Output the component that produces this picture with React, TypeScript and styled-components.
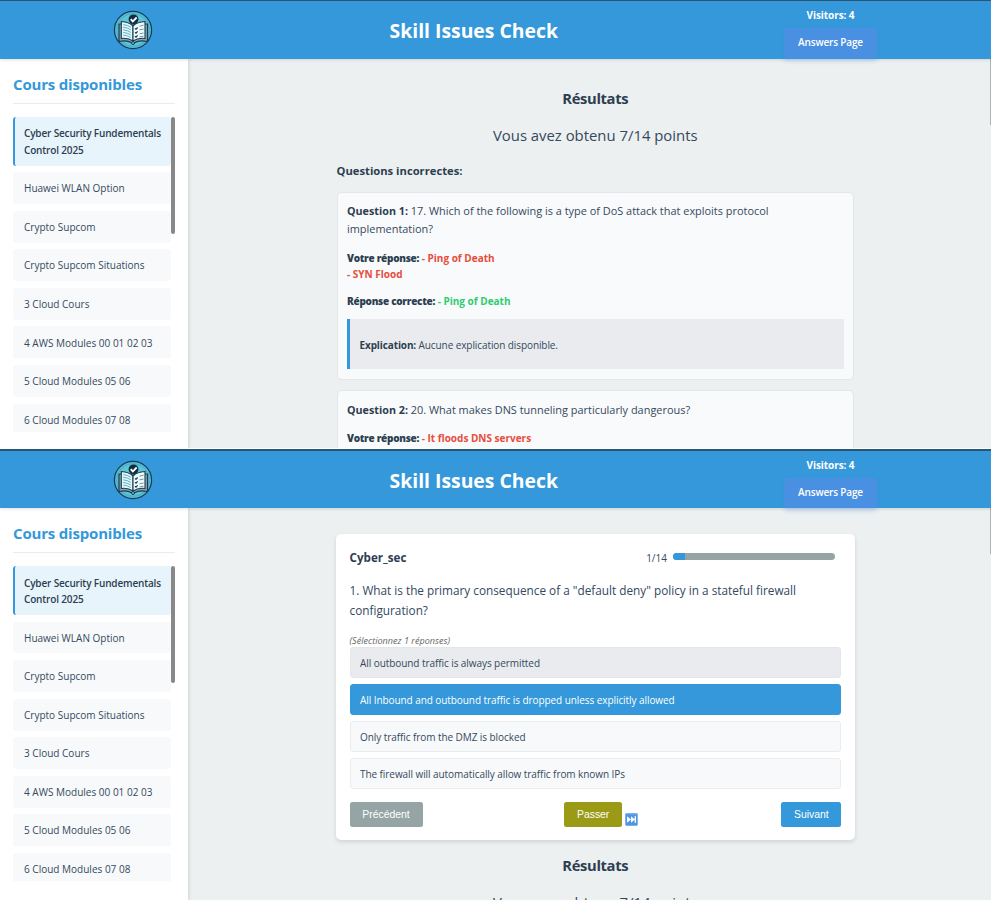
import React from 'react';
import styled, { createGlobalStyle, css } from 'styled-components';

const GlobalStyle = createGlobalStyle`
  * { box-sizing: border-box; }
  body {
    margin: 0;
    background: #ecf0f1;
    color: #34495e;
    font-family: "Open Sans", "Noto Sans", sans-serif;
  }
  h1, h2, h3, h4, p, ul { margin: 0; padding: 0; }
  ul { list-style: none; }
`;

const Page = styled.div`
  width: 991px;
  height: 900px;
  overflow: hidden;
`;

const Screen = styled.section<{ $last?: boolean }>`
  display: flex;
  flex-direction: column;
  height: ${(p) => (p.$last ? '451px' : '449px')};
  overflow: hidden;
  border-bottom: ${(p) => (p.$last ? 'none' : '1px solid #fbfcfc')};
`;

const TopBar = styled.header<{ $last?: boolean }>`
  position: relative;
  z-index: 2;
  flex: none;
  display: grid;
  grid-template-columns: 267px 413.5px 300px;
  height: ${(p) => (p.$last ? '59.4px' : '59px')};
  background: #3498db;
  border-top: ${(p) => (p.$last ? '2px' : '1px')} solid #2a5673;
  box-shadow: 0 1px 3px rgba(0, 0, 0, 0.13);
`;

const LogoCell = styled.div`
  display: flex;
  justify-content: center;
  padding: 9px 1px 0 0;
`;

const SiteTitle = styled.h1`
  color: #fff;
  font-size: 19.38px;
  font-weight: 700;
  line-height: 30px;
  padding-top: 15px;
  text-align: center;
`;

const Aside = styled.div`
  display: flex;
  flex-direction: column;
  align-items: center;
`;

const Visitors = styled.span`
  padding-top: 6px;
  color: #fff;
  font-size: 10px;
  font-weight: 700;
  line-height: 17px;
  letter-spacing: -0.07px;
`;

const AnswersLink = styled.a`
  margin-top: 4px;
  width: 93px;
  height: 30px;
  border-radius: 3px;
  background: #4a90e2;
  box-shadow: 0 3px 4px rgba(74, 144, 226, 0.28);
  color: #fff;
  font-size: 10px;
  font-weight: 600;
  line-height: 29px;
  letter-spacing: -0.15px;
  text-align: center;
`;

const Body = styled.div`
  flex: 1;
  min-height: 0;
  display: flex;
`;

const Sidebar = styled.nav`
  flex: none;
  width: 188px;
  padding: 13px;
  background: #fff;
  box-shadow: 1px 0 3px rgba(0, 0, 0, 0.12);
`;

const SidebarTitle = styled.h2`
  height: 32px;
  margin-bottom: 13px;
  border-bottom: 1px solid #e9ecee;
  color: #3498db;
  font-size: 15px;
  font-weight: 700;
  line-height: 25.6px;
  letter-spacing: -0.18px;
`;

const CourseScroller = styled.div`
  display: flex;
  justify-content: space-between;
  height: 315px;
  overflow: hidden;
`;

const CourseList = styled.ul`
  width: 158px;
`;

const Course = styled.li<{ $active?: boolean }>`
  height: 31.8px;
  margin-bottom: 6.75px;
  padding: 8.1px 11px;
  border-radius: 3px;
  background: #f8f9fa;
  font-size: 10.03px;
  line-height: 17px;
  white-space: nowrap;
  ${(p) =>
    p.$active &&
    css`
      height: 48.5px;
      padding: 8.3px 0 0 9px;
      border-left: 2px solid #3498db;
      background: #e8f4fc;
      color: #2c3e50;
      font-size: 10px;
      font-weight: 600;
      line-height: 16.6px;
      letter-spacing: -0.16px;
    `}
`;

const ScrollThumb = styled.div`
  width: 4px;
  height: 117px;
  border-radius: 2px;
  background: #888;
`;

const Main = styled.main`
  flex: 1;
  min-width: 0;
  display: flex;
  justify-content: space-between;
`;

const Column = styled.div`
  width: 517.5px;
  margin-left: 148.5px;
`;

const PageThumb = styled.div<{ $h: number }>`
  width: 1px;
  height: ${(p) => p.$h}px;
  background: #aeb2b3;
`;

const ResultTitle = styled.h2<{ $top: number }>`
  padding-top: ${(p) => p.$top}px;
  color: #2c3e50;
  font-size: 14.75px;
  font-weight: 700;
  line-height: 24px;
  letter-spacing: -0.33px;
  text-align: center;
`;

const Score = styled.p`
  margin-top: 13px;
  font-size: 14.86px;
  line-height: 25px;
  text-align: center;
`;

const SectionTitle = styled.h3`
  margin-top: 12.5px;
  color: #2c3e50;
  font-size: 11.22px;
  font-weight: 700;
  line-height: 20px;
`;

const ReviewCard = styled.article`
  margin: 11.3px 0 10px;
  height: 188.5px;
  padding: 9.5px 9px 0 9.5px;
  border: 1px solid #e3e7e9;
  border-radius: 5px;
  background: #f9fafb;
  & + & { margin-top: 0; }
`;

const Prompt = styled.p`
  font-size: 10.93px;
  line-height: 18px;
  b { color: #2c3e50; font-size: 10.75px; }
`;

const Answer = styled.p<{ $tone: string; $gap: number }>`
  margin-top: ${(p) => p.$gap}px;
  color: ${(p) => p.$tone};
  font-size: 10px;
  font-weight: 700;
  line-height: 16.6px;
  b { color: #2c3e50; letter-spacing: -0.28px; }
`;

const Explanation = styled.div`
  margin-top: 9.2px;
  height: 50px;
  border-left: 3px solid #3498db;
  background: #e9ebee;
  padding-left: 9.5px;
  font-size: 10px;
  line-height: 52px;
  letter-spacing: -0.09px;
  b { color: #2c3e50; letter-spacing: -0.12px; }
`;

const QuizCard = styled.article`
  margin: 26px 0 0 -0.5px;
  width: 518.5px;
  height: 305.5px;
  padding: 13px 13.2px 0 13.5px;
  border-radius: 5px;
  background: #fff;
  box-shadow: 0 2px 4px rgba(0, 0, 0, 0.12);
`;

const QuizHead = styled.div`
  display: flex;
  align-items: center;
  height: 21px;
  padding-right: 6px;
`;

const QuizName = styled.h3`
  flex: 1;
  color: #2c3e50;
  font-size: 11.64px;
  font-weight: 700;
  line-height: 20px;
`;

const Counter = styled.span`
  margin-right: 6.5px;
  font-size: 10px;
  letter-spacing: -0.05px;
`;

const Track = styled.div`
  width: 162px;
  height: 7px;
  margin-top: -2px;
  border-radius: 4px;
  background: #95a5a6;
  overflow: hidden;
`;

const Fill = styled.div`
  width: 12px;
  height: 100%;
  background: #3498db;
`;

const Question = styled.p`
  margin-top: 12.7px;
  font-size: 11.79px;
  line-height: 19.6px;
`;

const Hint = styled.p`
  margin-top: 12.1px;
  height: 15px;
  color: #666;
  font-size: 9px;
  font-style: italic;
  line-height: 17px;
  letter-spacing: 0.04px;
`;

const optionTone = {
  plain: css`background: #f8f9fa; border-color: #eaedef;`,
  hover: css`background: #e9ebee; border-color: #e4e7ea;`,
  picked: css`background: #3498db; border-color: #3498db; color: #fff;`,
};

const Option = styled.li<{ $tone: keyof typeof optionTone }>`
  height: 31px;
  margin-bottom: 6px;
  padding-left: 9.5px;
  border: 1px solid;
  border-radius: 3px;
  font-size: 10px;
  line-height: 30px;
  letter-spacing: -0.07px;
  ${(p) => optionTone[p.$tone]}
`;

const Actions = styled.div`
  display: flex;
  justify-content: space-between;
  margin-top: 12.5px;
`;

const Button = styled.button<{ $color: string; $width: number }>`
  width: ${(p) => p.$width}px;
  height: 25px;
  padding: 0;
  border: 0;
  border-radius: 2.5px;
  background: ${(p) => p.$color};
  color: #fff;
  font: 10.4px "Liberation Sans", Arial, sans-serif;
`;

const SkipGroup = styled.div`
  display: flex;
  align-items: flex-end;
  gap: 2.5px;
  margin-right: 2px;
  svg { margin-bottom: 0.5px; }
`;

const Logo = () => (
  <svg width="40" height="40" viewBox="0 0 40 40">
    <circle cx="20" cy="20" r="18.6" fill="#54b9d1" stroke="#173b50" strokeWidth="1.2" />
    <circle cx="20" cy="20" r="16.2" fill="#5ec5d8" stroke="#419fbd" strokeWidth=".6" />
    <path d="M6 14v17.5q8-1.5 12.5 1.2 1.5 1.2 3 0Q26 30 34.5 31.5V14z" fill="#8aa5b5" stroke="#173b50" strokeWidth="1.2" strokeLinejoin="round" />
    <path d="M8.3 11.5Q16 12 20 16v15Q15 27.6 8.3 28.5z" fill="#e9f6f7" stroke="#173b50" strokeWidth="1.1" />
    <path d="M32 11.5q-8 .5-12 4.5v15q5-3.4 12-2.5z" fill="#eefafb" stroke="#173b50" strokeWidth="1.1" />
    <path d="M10.2 14.6q4.4.5 7.6 2.6M10.2 17.2q4.4.5 7.6 2.6M10.2 19.8q4.4.5 7.6 2.6M10.2 22.4q4.4.5 7.6 2.6M10.2 25q4.4.5 7.6 2.6" fill="none" stroke="#50b3cc" />
    <path d="m22 18.5 1 .8 1.6-1.8m-2.6 4.9 1 .8 1.6-1.8m-2.6 4.9 1 .8 1.6-1.8" fill="none" stroke="#173b50" strokeWidth="1.2" />
    <path d="m26.5 16.2 4-1m-4 4.7 4-.9m-4 4.8 4-.8m-4 3.9 4-.7" stroke="#668291" strokeWidth=".9" />
    <circle cx="20" cy="33" r="1.5" fill="#5ec5d8" stroke="#173b50" />
    <circle cx="20.5" cy="9.3" r="4.9" fill="#102d42" />
    <path d="m17.7 9.2 2.1 2.2 3.9-3.9" fill="none" stroke="#fff" strokeWidth="1.8" />
  </svg>
);

const SkipIcon = () => (
  <svg width="13" height="13" viewBox="0 0 13 13">
    <rect x=".3" y=".3" width="12.4" height="12.4" rx="1.2" fill="#4d96e6" />
    <path d="M.8.8h11.4" stroke="#7db5f0" />
    <path d="M2 3.2 6 6.5 2 9.8zM6 3.2l3.8 3.3L6 9.8zM9.6 3.2H11v6.6H9.6z" fill="#fff" />
  </svg>
);

const courses = [
  'Huawei WLAN Option',
  'Crypto Supcom',
  'Crypto Supcom Situations',
  '3 Cloud Cours',
  '4 AWS Modules 00 01 02 03',
  '5 Cloud Modules 05 06',
  '6 Cloud Modules 07 08',
];

const RED = '#e74c3c';
const GREEN = '#2ecc71';

const Header = ({ last }: { last?: boolean }) => (
  <TopBar $last={last}>
    <LogoCell><Logo /></LogoCell>
    <SiteTitle>Skill Issues Check</SiteTitle>
    <Aside>
      <Visitors>Visitors: 4</Visitors>
      <AnswersLink>Answers Page</AnswersLink>
    </Aside>
  </TopBar>
);

const Courses = () => (
  <Sidebar>
    <SidebarTitle>Cours disponibles</SidebarTitle>
    <CourseScroller>
      <CourseList>
        <Course $active>Cyber Security Fundementals<br />Control 2025</Course>
        {courses.map((name) => <Course key={name}>{name}</Course>)}
      </CourseList>
      <ScrollThumb />
    </CourseScroller>
  </Sidebar>
);

export default function App() {
  return (
    <Page>
      <GlobalStyle />
      <Screen>
        <Header />
        <Body>
          <Courses />
          <Main>
            <Column>
              <ResultTitle $top={27}>Résultats</ResultTitle>
              <Score>Vous avez obtenu 7/14 points</Score>
              <SectionTitle>Questions incorrectes:</SectionTitle>
              <ReviewCard>
                <Prompt><b>Question 1:</b> 17. Which of the following is a type of DoS attack that exploits protocol<br />implementation?</Prompt>
                <Answer $tone={RED} $gap={11.5}><b>Votre réponse:</b> - Ping of Death<br />- SYN Flood</Answer>
                <Answer $tone={GREEN} $gap={10.3}><b>Réponse correcte:</b> - Ping of Death</Answer>
                <Explanation><b>Explication:</b> Aucune explication disponible.</Explanation>
              </ReviewCard>
              <ReviewCard>
                <Prompt><b>Question 2:</b> 20. What makes DNS tunneling particularly dangerous?</Prompt>
                <Answer $tone={RED} $gap={11.2}><b>Votre réponse:</b> - It floods DNS servers</Answer>
              </ReviewCard>
            </Column>
            <PageThumb $h={66} />
          </Main>
        </Body>
      </Screen>
      <Screen $last>
        <Header last />
        <Body>
          <Courses />
          <Main>
            <Column>
              <QuizCard>
                <QuizHead>
                  <QuizName>Cyber_sec</QuizName>
                  <Counter>1/14</Counter>
                  <Track><Fill /></Track>
                </QuizHead>
                <Question>1. What is the primary consequence of a "default deny" policy in a stateful firewall<br />configuration?</Question>
                <Hint>(Sélectionnez 1 réponses)</Hint>
                <ul>
                  <Option $tone="hover">All outbound traffic is always permitted</Option>
                  <Option $tone="picked">All Inbound and outbound traffic is dropped unless explicitly allowed</Option>
                  <Option $tone="plain">Only traffic from the DMZ is blocked</Option>
                  <Option $tone="plain">The firewall will automatically allow traffic from known IPs</Option>
                </ul>
                <Actions>
                  <Button $color="#95a5a6" $width={73}>Précédent</Button>
                  <SkipGroup>
                    <Button $color="#9a9a16" $width={58}>Passer</Button>
                    <SkipIcon />
                  </SkipGroup>
                  <Button $color="#3498db" $width={60}>Suivant</Button>
                </Actions>
              </QuizCard>
              <ResultTitle $top={13.2}>Résultats</ResultTitle>
              <Score>Vous avez obtenu 7/14 points</Score>
            </Column>
            <PageThumb $h={46} />
          </Main>
        </Body>
      </Screen>
    </Page>
  );
}
